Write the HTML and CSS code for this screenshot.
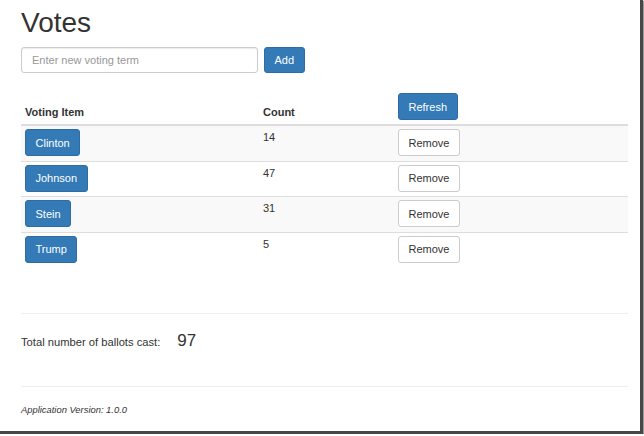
FILE: index.html
```html
<!DOCTYPE html>
<html>
<head>
<meta charset="utf-8">
<title>Votes</title>
<link rel="stylesheet" href="styles.css">
</head>
<body>
<div class="frame">
  <div class="container">
    <h1 class="title">Votes</h1>
    <form class="add-form">
      <input class="term" type="text" placeholder="Enter new voting term">
      <button class="btn btn-primary" type="button">Add</button>
    </form>
    <table class="votes">
      <thead>
        <tr>
          <th class="col-item">Voting Item</th>
          <th class="col-count">Count</th>
          <th class="col-action"><button class="btn btn-primary" type="button">Refresh</button></th>
        </tr>
      </thead>
      <tbody>
        <tr>
          <td><button class="btn btn-primary" type="button">Clinton</button></td>
          <td class="count">14</td>
          <td><button class="btn btn-default" type="button">Remove</button></td>
        </tr>
        <tr>
          <td><button class="btn btn-primary" type="button">Johnson</button></td>
          <td class="count">47</td>
          <td><button class="btn btn-default" type="button">Remove</button></td>
        </tr>
        <tr>
          <td><button class="btn btn-primary" type="button">Stein</button></td>
          <td class="count">31</td>
          <td><button class="btn btn-default" type="button">Remove</button></td>
        </tr>
        <tr>
          <td><button class="btn btn-primary" type="button">Trump</button></td>
          <td class="count">5</td>
          <td><button class="btn btn-default" type="button">Remove</button></td>
        </tr>
      </tbody>
    </table>
    <hr class="rule rule-top">
    <div class="total">
      <span class="total-label">Total number of ballots cast:</span>
      <span class="total-value">97</span>
    </div>
    <hr class="rule rule-bottom">
    <p class="footer"><em>Application Version: 1.0.0</em></p>
  </div>
</div>
</body>
</html>
```

FILE: styles.css
```css
html, body {
  margin: 0;
  padding: 0;
  background: #ffffff;
}

body {
  font-family: "Liberation Sans", Arial, sans-serif;
  font-size: 11px;
  line-height: 16px;
  color: #333333;
}

.frame {
  width: 640px;
  height: 431px;
  background: #ffffff;
  border-right: 3px solid #474747;
  border-bottom: 3px solid #474747;
  box-shadow: 1px 1px 1px #9a9a9a;
  overflow: hidden;
}

.container {
  padding: 0 12px 0 21px;
}

.title {
  margin: 7px 0 0 0;
  font-size: 28px;
  font-weight: 500;
  line-height: 31px;
  color: #333333;
}

.add-form {
  display: flex;
  gap: 6px;
  margin: 9px 0 0 0;
}

.term {
  box-sizing: border-box;
  width: 237px;
  height: 26px;
  padding: 0 10px;
  border: 1px solid #cccccc;
  border-radius: 3px;
  box-shadow: inset 0 1px 1px rgba(0, 0, 0, 0.075);
  font-family: "Liberation Sans", Arial, sans-serif;
  font-size: 11px;
  color: #555555;
  outline: none;
}

.term::placeholder {
  color: #999999;
}

.btn {
  box-sizing: border-box;
  height: 27px;
  padding: 0 9.5px;
  border: 1px solid transparent;
  border-radius: 3px;
  font-family: "Liberation Sans", Arial, sans-serif;
  font-size: 11px;
  line-height: 16px;
  cursor: pointer;
  white-space: nowrap;
}

.add-form .btn {
  height: 26px;
}

.btn-primary {
  background: #337ab7;
  border-color: #2e6da4;
  color: #ffffff;
}

.btn-default {
  background: #ffffff;
  border-color: #cccccc;
  color: #333333;
}

.votes {
  width: 607px;
  margin-top: 15px;
  border-collapse: collapse;
  border-spacing: 0;
}

.votes th {
  padding: 5px 4px 4px 4px;
  text-align: left;
  vertical-align: bottom;
  font-weight: bold;
  border-bottom: 2px solid #dddddd;
}

.col-item {
  width: 230px;
}

.col-count {
  width: 127px;
}

.votes td {
  padding: 3px 4px 4.5px 4px;
  vertical-align: top;
  border-top: 1px solid #dddddd;
}

.votes tbody tr:first-child td {
  border-top: none;
}

.votes tbody tr:nth-child(odd) td {
  background: #f9f9f9;
}

.votes td.count {
  padding-top: 3px;
}

.rule {
  margin: 0;
  border: 0;
  border-top: 1px solid #eeeeee;
  width: 607px;
}

.rule-top {
  margin-top: 46px;
}

.total {
  display: flex;
  align-items: baseline;
  gap: 17px;
  margin-top: 17px;
  line-height: 20px;
}

.total-label {
  font-size: 11.2px;
}

.total-value {
  font-size: 17px;
}

.rule-bottom {
  margin-top: 34px;
}

.footer {
  margin: 17px 0 0 0;
  font-size: 9.4px;
  line-height: 12px;
}
```
